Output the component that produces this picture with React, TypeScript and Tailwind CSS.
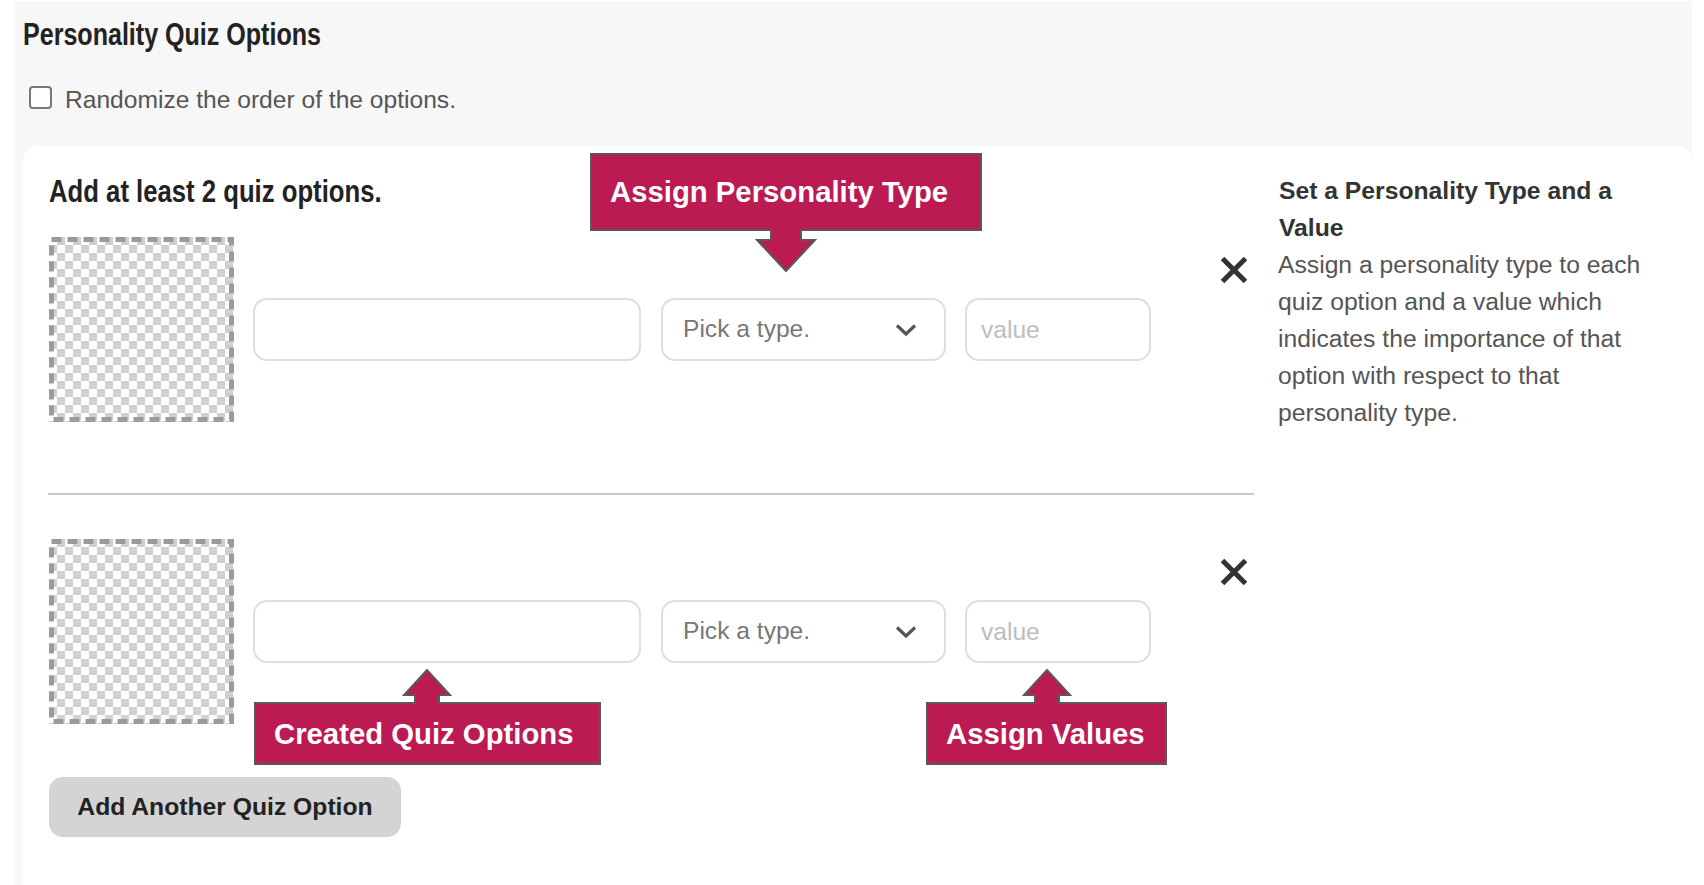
const SANS = "font-['Liberation_Sans',Arial,sans-serif]";

function CloseIcon() {
  return (
    <svg width="28" height="28" viewBox="0 0 28 28" className="text-[#333]">
      <path d="M2.5 2.5 L25.5 25.5 M25.5 2.5 L2.5 25.5" stroke="currentColor" strokeWidth="5" fill="none" />
    </svg>
  );
}

function Chevron() {
  return (
    <svg width="24" height="14" viewBox="0 0 24 14" className="text-[#555]">
      <path d="M3 2.5 L12 11 L21 2.5" stroke="currentColor" strokeWidth="3.2" fill="none" />
    </svg>
  );
}

function ImagePlaceholder() {
  return (
    <div className="relative h-[185px] w-[185px] shrink-0 bg-[repeating-conic-gradient(#d0d0d0_0_25%,#ffffff_0_50%)] bg-[length:16px_16px]">
      <svg width="185" height="185" viewBox="0 0 185 185" className="absolute inset-0">
        <rect x="2.5" y="2.5" width="180" height="180" fill="none" stroke="#9b9b9b" strokeWidth="5" strokeDasharray="10 6" />
      </svg>
    </div>
  );
}

function QuizOption() {
  return (
    <div className="flex items-start">
      <div className="flex items-center gap-5">
        <ImagePlaceholder />
        <input className="-ml-px h-[63px] w-[388px] rounded-[14px] border-2 border-[#dedede] bg-white" />
        <div className="flex h-[63px] w-[285px] items-center justify-between rounded-[14px] border-2 border-[#dedede] pl-[20px] pr-[26px] text-[24.6px] text-[#777]">
          Pick a type.
          <Chevron />
        </div>
        <input
          placeholder="value"
          className="-ml-px h-[63px] w-[186px] rounded-[14px] border-2 border-[#dedede] px-[14px] text-[24.6px] placeholder:text-[#bdbdbd]"
        />
      </div>
      <button className="ml-[69px] mt-[19px]">
        <CloseIcon />
      </button>
    </div>
  );
}

function Callout({ label, className, children }: { label: string; className: string; children: React.ReactNode }) {
  return (
    <div className={`absolute flex items-center border-2 border-[#595959] bg-[#bb1a52] text-[29.3px] font-bold text-white ${className}`}>
      {label}
      {children}
    </div>
  );
}

// arrow head + shaft; x/y relative to its own svg box
function ArrowUp({ className }: { className: string }) {
  return (
    <svg width="50" height="36" viewBox="0 0 50 36" className={`absolute ${className}`}>
      <polygon points="25,1 48,26 37,26 37,36 13,36 13,26 2,26" fill="#bb1a52" />
      <polyline points="13,35 13,26 2,26 25,1 48,26 37,26 37,35" fill="none" stroke="#595959" strokeWidth="2" />
    </svg>
  );
}

function ArrowDown({ className }: { className: string }) {
  return (
    <svg width="64" height="44" viewBox="0 0 64 44" className={`absolute ${className}`}>
      <polygon points="32,42 61,11 47,11 47,0 17,0 17,11 3,11" fill="#bb1a52" />
      <polyline points="17,1 17,11 3,11 32,42 61,11 47,11 47,1" fill="none" stroke="#595959" strokeWidth="2" />
    </svg>
  );
}

export default function App() {
  return (
    <div className={`relative h-[885px] overflow-hidden bg-white ${SANS}`}>
      <div className="ml-[15px] mr-[12px] mt-px h-[884px] bg-[#f7f7f7] pl-[8px]">
        <h1 className="origin-left scale-x-[0.783] pt-[14px] text-[32px] font-bold leading-[38px] text-[#222]">
          Personality Quiz Options
        </h1>
        <label className="mt-[32px] flex h-[24px] items-center gap-[13px] pl-[6px] text-[24.6px] text-[#555]">
          <input type="checkbox" className="h-[23px] w-[23px] appearance-none rounded-[4px] border-2 border-[#777] bg-white" />
          <span className="mt-[6px]">Randomize the order of the options.</span>
        </label>

        <div className="mt-[37px] flex h-[760px] rounded-tl-[14px] rounded-tr-[14px] bg-white pl-[26px] pt-[24px]">
          <div className="w-[1205px] shrink-0">
            <h2 className="mb-[27px] origin-left scale-x-[0.803] pt-[3px] text-[32px] font-bold leading-[37px] text-[#222]">
              Add at least 2 quiz options.
            </h2>
            <QuizOption />
            <div className="-ml-px mb-[44px] mt-[71px] border-t-2 border-[#c9c9c9]" />
            <QuizOption />
            <button className="mt-[53px] h-[60px] w-[352px] rounded-[14px] bg-[#d4d4d4] text-[24.7px] font-bold text-[#222]">
              Add Another Quiz Option
            </button>
          </div>
          <div className="ml-[24px] w-[375px] pt-[2px] text-[24.7px] leading-[37px] text-[#555]">
            <div className="pl-px font-bold text-[#333]">Set a Personality Type and a Value</div>
            Assign a personality type to each quiz option and a value which indicates the importance of that option with respect to that personality type.
          </div>
        </div>
      </div>

      <Callout label="Assign Personality Type" className="left-[590px] top-[153px] h-[78px] w-[392px] pl-[18px]">
        <ArrowDown className="left-[162px] top-[74px]" />
      </Callout>
      <Callout label="Created Quiz Options" className="left-[254px] top-[702px] h-[63px] w-[347px] pl-[18px]">
        <ArrowUp className="left-[146px] top-[-35px]" />
      </Callout>
      <Callout label="Assign Values" className="left-[926px] top-[702px] h-[63px] w-[241px] pl-[18px]">
        <ArrowUp className="left-[94px] top-[-35px]" />
      </Callout>
    </div>
  );
}
